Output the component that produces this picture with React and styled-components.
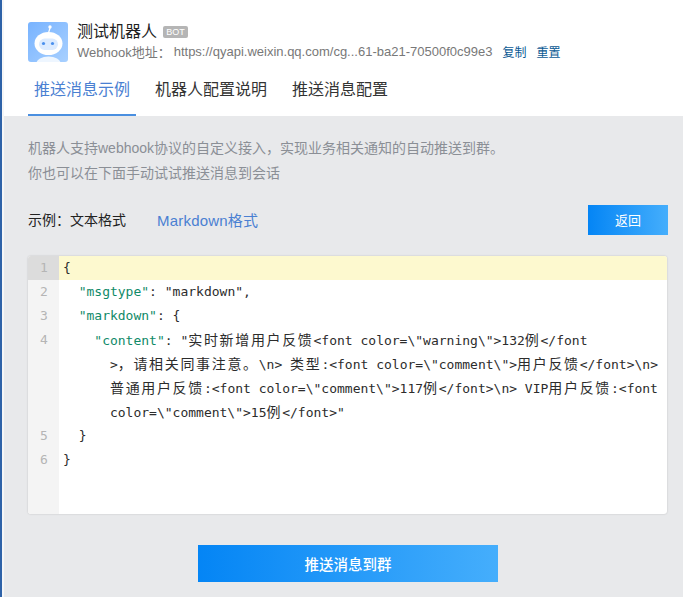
import React from 'react';
import styled, { createGlobalStyle } from 'styled-components';

const FONT = '"Liberation Sans", "Noto Sans CJK SC", sans-serif';
const MONO = '"DejaVu Sans Mono", "Noto Sans CJK SC", monospace';

const GlobalStyle = createGlobalStyle`
  html, body { margin: 0; padding: 0; background: #e8e9eb; }
  body { font-family: ${FONT}; }
  * { box-sizing: border-box; }
`;

const Page = styled.div`
  position: relative;
  display: flex;
  flex-direction: column;
  width: 683px;
  height: 597px;
  overflow: hidden;
  border-left: 2px solid #2e62a8;
  padding-left: 2px;
  background: #f5f6f7;

  &::before {
    content: '';
    position: absolute;
    left: -2px;
    top: 0;
    width: 2px;
    height: 40px;
    background: #2b3a4d;
  }
`;

const Header = styled.header`
  background: #fff;
  height: 116px;
  padding: 22px 0 0 24px;
`;

const Profile = styled.div`
  display: flex;
  align-items: flex-start;
  gap: 9px;
`;

const Avatar = styled.svg`
  width: 40px;
  height: 40px;
  border-radius: 3px;
  display: block;
`;

const NameRow = styled.div`
  display: flex;
  align-items: center;
  gap: 6px;
  height: 20px;
`;

const Name = styled.span`
  font-size: 16px;
  line-height: 20px;
  color: #222;
`;

const Badge = styled.span`
  width: 25px;
  height: 12px;
  border-radius: 2px;
  background: #b5b5b5;
  color: #fff;
  font-size: 9px;
  line-height: 12px;
  text-align: center;
`;

const HookRow = styled.div`
  display: flex;
  align-items: center;
  height: 18px;
  font-size: 13px;
  color: #787878;
`;

const HookUrl = styled.span`
  margin-left: 3px;
  margin-right: 10px;
`;

const HookLink = styled.a`
  color: #0b5a94;
  font-size: 12px;
  margin-right: 10px;
`;

const Tabs = styled.nav`
  display: flex;
  margin-top: 12px;
`;

const Tab = styled.div`
  height: 42px;
  padding: 0 6px;
  margin-right: 13px;
  font-size: 16px;
  line-height: 32px;
  color: ${p => (p.$active ? '#4a80d2' : '#333')};
  border-bottom: 2px solid ${p => (p.$active ? '#4a8fe0' : 'transparent')};
`;

const Body = styled.main`
  flex: 1;
  padding: 20px 15px 0 24px;
  background: #e8e9eb;
`;

const Intro = styled.p`
  margin: 0;
  font-size: 14px;
  line-height: 25px;
  color: #8b8f96;
`;

const ExampleRow = styled.div`
  display: flex;
  align-items: center;
  height: 30px;
  margin-top: 19px;
`;

const ExampleLabel = styled.span`
  font-size: 14px;
  color: #222;
  width: 129px;
  margin-bottom: 2px;
`;

const FormatLink = styled.a`
  font-size: 15px;
  letter-spacing: 0.2px;
  color: #4a80d2;
  margin-bottom: 2px;
`;

const BackButton = styled.button`
  margin-left: auto;
  width: 80px;
  height: 30px;
  border: 0;
  padding: 0 0 2px;
  color: #fff;
  font-family: ${FONT};
  font-size: 13px;
  background: linear-gradient(90deg, #0485f5, #45aefc);
`;

const Editor = styled.section`
  display: flex;
  width: 639px;
  height: 258px;
  margin-top: 21px;
  border-radius: 3px;
  overflow: hidden;
  background: #fff;
  box-shadow: 0 0 2px rgba(0, 0, 0, 0.2);
`;

const Gutter = styled.div`
  flex: none;
  width: 31px;
  background: #f4f4f4;
`;

const GutterLine = styled.div`
  height: ${p => p.$rows * 24}px;
  line-height: 24px;
  padding-left: 12px;
  font-family: ${MONO};
  font-size: 13px;
  color: #b5b5b5;
  background: ${p => (p.$active ? '#dcdcdc' : 'transparent')};
`;

const Code = styled.div`
  flex: 1;
  min-width: 0;
`;

const CodeLine = styled.div`
  height: 24px;
  line-height: 24px;
  padding-left: ${p => 4 + p.$indent * 7.83}px;
  font-family: ${MONO};
  font-size: 13px;
  white-space: pre;
  color: #2c2c2c;
  background: ${p => (p.$active ? '#fdf9cf' : 'transparent')};
`;

const Key = styled.span`
  color: #108a68;
`;

const Cjk = styled.span`
  font-size: 14px;
  letter-spacing: 1.66px;
`;

const Footer = styled.div`
  display: flex;
  justify-content: center;
  margin-top: 31px;
  width: 640px;
`;

const SendButton = styled.button`
  width: 300px;
  height: 37px;
  border: 0;
  padding: 0;
  color: #fff;
  font-family: ${FONT};
  font-size: 14.5px;
  font-weight: 500;
  background: linear-gradient(90deg, #0485f5, #45aefc);
`;

const RobotAvatar = () => (
  <Avatar viewBox="0 0 40 40">
    <defs>
      <linearGradient id="sky" x1="0" y1="0" x2="1" y2="1">
        <stop offset="0" stopColor="#78b3ff" />
        <stop offset="1" stopColor="#a8d0ff" />
      </linearGradient>
    </defs>
    <rect width="40" height="40" fill="url(#sky)" />
    <path d="M20.5 11 L22 6" stroke="#fff" strokeWidth="1.2" />
    <circle cx="22" cy="5" r="1.7" fill="#fff" />
    <ellipse cx="20.5" cy="41" rx="12" ry="6.5" fill="#eef6ff" />
    <ellipse cx="20.5" cy="21.5" rx="14" ry="11.5" fill="#fff" />
    <rect x="11" y="16.5" width="19" height="11.5" rx="5.7" fill="#dcebff" />
    <circle cx="15.5" cy="21.5" r="1.6" fill="#4a90ee" />
    <circle cx="24.5" cy="21.5" r="1.6" fill="#4a90ee" />
  </Avatar>
);

export default function App() {
  return (
    <Page>
      <GlobalStyle />
      <Header>
        <Profile>
          <RobotAvatar />
          <div>
            <NameRow>
              <Name>测试机器人</Name>
              <Badge>BOT</Badge>
            </NameRow>
            <HookRow>
              Webhook地址：
              <HookUrl>https://qyapi.weixin.qq.com/cg...61-ba21-70500f0c99e3</HookUrl>
              <HookLink>复制</HookLink>
              <HookLink>重置</HookLink>
            </HookRow>
          </div>
        </Profile>
        <Tabs>
          <Tab $active>推送消息示例</Tab>
          <Tab>机器人配置说明</Tab>
          <Tab>推送消息配置</Tab>
        </Tabs>
      </Header>
      <Body>
        <Intro>
          机器人支持webhook协议的自定义接入，实现业务相关通知的自动推送到群。
          <br />
          你也可以在下面手动试试推送消息到会话
        </Intro>
        <ExampleRow>
          <ExampleLabel>示例：文本格式</ExampleLabel>
          <FormatLink>Markdown格式</FormatLink>
          <BackButton>返回</BackButton>
        </ExampleRow>
        <Editor>
          <Gutter>
            <GutterLine $rows={1} $active>1</GutterLine>
            <GutterLine $rows={1}>2</GutterLine>
            <GutterLine $rows={1}>3</GutterLine>
            <GutterLine $rows={4}>4</GutterLine>
            <GutterLine $rows={1}>5</GutterLine>
            <GutterLine $rows={1}>6</GutterLine>
          </Gutter>
          <Code>
            <CodeLine $indent={0} $active>{'{'}</CodeLine>
            <CodeLine $indent={2}><Key>"msgtype"</Key>: "markdown",</CodeLine>
            <CodeLine $indent={2}><Key>"markdown"</Key>: {'{'}</CodeLine>
            <CodeLine $indent={4}><Key>"content"</Key>: "<Cjk>实时新增用户反馈</Cjk>&lt;font color=\"warning\"&gt;132<Cjk>例</Cjk>&lt;/font</CodeLine>
            <CodeLine $indent={6}>&gt;<Cjk>，请相关同事注意。</Cjk>\n&gt; <Cjk>类型</Cjk>:&lt;font color=\"comment\"&gt;<Cjk>用户反馈</Cjk>&lt;/font&gt;\n&gt;</CodeLine>
            <CodeLine $indent={6}><Cjk>普通用户反馈</Cjk>:&lt;font color=\"comment\"&gt;117<Cjk>例</Cjk>&lt;/font&gt;\n&gt; VIP<Cjk>用户反馈</Cjk>:&lt;font</CodeLine>
            <CodeLine $indent={6}>color=\"comment\"&gt;15<Cjk>例</Cjk>&lt;/font&gt;"</CodeLine>
            <CodeLine $indent={2}>{'}'}</CodeLine>
            <CodeLine $indent={0}>{'}'}</CodeLine>
          </Code>
        </Editor>
        <Footer>
          <SendButton>推送消息到群</SendButton>
        </Footer>
      </Body>
    </Page>
  );
}
